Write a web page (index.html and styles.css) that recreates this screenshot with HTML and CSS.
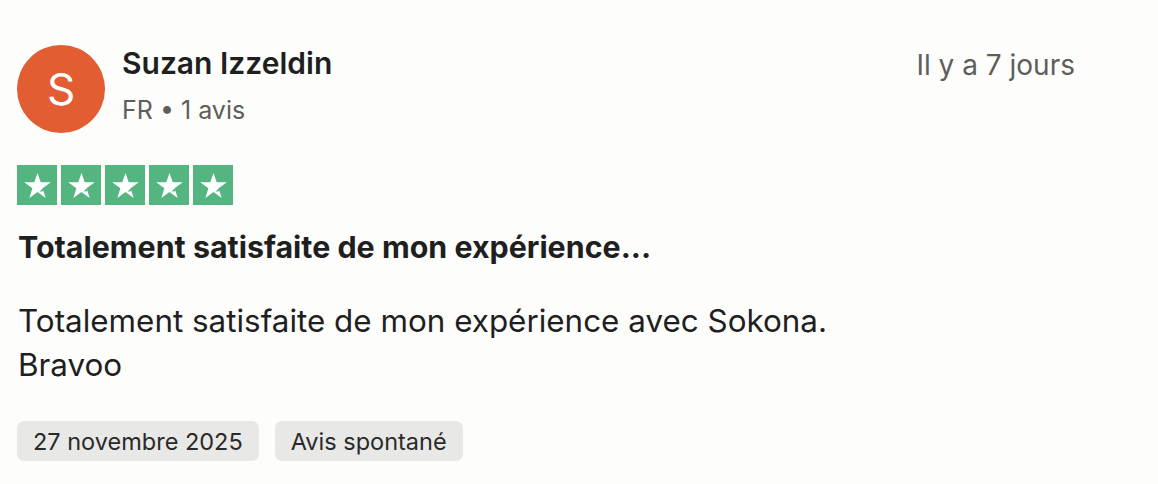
FILE: index.html
```html
<!DOCTYPE html>
<html lang="fr">
<head>
<meta charset="utf-8">
<link rel="stylesheet" href="styles.css">
</head>
<body>
<article class="review">
  <header class="head">
    <div class="avatar">S</div>
    <div class="who">
      <div class="name">Suzan Izzeldin</div>
      <div class="meta">FR • 1 avis</div>
    </div>
    <div class="when">Il y a 7 jours</div>
  </header>
  <div class="stars">
    <span class="star"><svg viewBox="0 0 24 24"><path d="M12 3.2l2.2 6.6h6.9l-5.6 4.1 2.1 6.6L12 16.4l-5.6 4.1 2.1-6.6-5.6-4.1h6.9z" fill="#fff"/><path d="M15.5 13.9l0.6 1.9-2.6 0.5z" fill="#54b581"/></svg></span>
    <span class="star"><svg viewBox="0 0 24 24"><path d="M12 3.2l2.2 6.6h6.9l-5.6 4.1 2.1 6.6L12 16.4l-5.6 4.1 2.1-6.6-5.6-4.1h6.9z" fill="#fff"/><path d="M15.5 13.9l0.6 1.9-2.6 0.5z" fill="#54b581"/></svg></span>
    <span class="star"><svg viewBox="0 0 24 24"><path d="M12 3.2l2.2 6.6h6.9l-5.6 4.1 2.1 6.6L12 16.4l-5.6 4.1 2.1-6.6-5.6-4.1h6.9z" fill="#fff"/><path d="M15.5 13.9l0.6 1.9-2.6 0.5z" fill="#54b581"/></svg></span>
    <span class="star"><svg viewBox="0 0 24 24"><path d="M12 3.2l2.2 6.6h6.9l-5.6 4.1 2.1 6.6L12 16.4l-5.6 4.1 2.1-6.6-5.6-4.1h6.9z" fill="#fff"/><path d="M15.5 13.9l0.6 1.9-2.6 0.5z" fill="#54b581"/></svg></span>
    <span class="star"><svg viewBox="0 0 24 24"><path d="M12 3.2l2.2 6.6h6.9l-5.6 4.1 2.1 6.6L12 16.4l-5.6 4.1 2.1-6.6-5.6-4.1h6.9z" fill="#fff"/><path d="M15.5 13.9l0.6 1.9-2.6 0.5z" fill="#54b581"/></svg></span>
  </div>
  <h2 class="title">Totalement satisfaite de mon expérience...</h2>
  <p class="body">Totalement satisfaite de mon expérience avec Sokona.<br>Bravoo</p>
  <div class="tags">
    <span class="tag">27 novembre 2025</span>
    <span class="tag">Avis spontané</span>
  </div>
</article>
</body>
</html>
```
FILE: styles.css
```css
html, body {
  margin: 0;
  padding: 0;
  background: #fdfdfc;
}
body {
  font-family: Inter, "Noto Sans", sans-serif;
  color: #1f1f1f;
}
.review {
  padding: 45px 83px 0 17px;
}
.head {
  display: flex;
  align-items: flex-start;
}
.avatar {
  width: 88px;
  height: 88px;
  border-radius: 50%;
  background: #e35d33;
  color: #fff;
  font-size: 44px;
  font-weight: 400;
  display: flex;
  align-items: center;
  justify-content: center;
  flex-shrink: 0;
}
.who {
  margin-left: 17px;
  flex: 1;
}
.name {
  font-size: 30px;
  font-weight: 600;
  line-height: 36px;
}
.meta {
  font-size: 25px;
  color: #5e5e5b;
  line-height: 30px;
  margin-top: 14px;
}
.when {
  font-size: 28px;
  color: #5e5e5b;
  line-height: 36px;
  margin-top: 2px;
}
.stars {
  display: flex;
  gap: 4px;
  margin-top: 32px;
}
.star {
  width: 40px;
  height: 40px;
  background: #54b581;
  display: flex;
  align-items: center;
  justify-content: center;
}
.star svg {
  width: 35px;
  height: 35px;
}
.title {
  margin: 24px 1px 0;
  font-size: 30.4px;
  font-weight: 700;
  line-height: 36px;
}
.body {
  margin: 34px 1px 0;
  font-size: 31.4px;
  line-height: 44px;
}
.tags {
  display: flex;
  gap: 16px;
  margin-top: 34px;
}
.tag {
  background: #e8e8e6;
  border-radius: 7px;
  height: 40px;
  padding: 0 16px;
  display: flex;
  align-items: center;
  font-size: 23.5px;
  color: #2a2a2a;
}
```
